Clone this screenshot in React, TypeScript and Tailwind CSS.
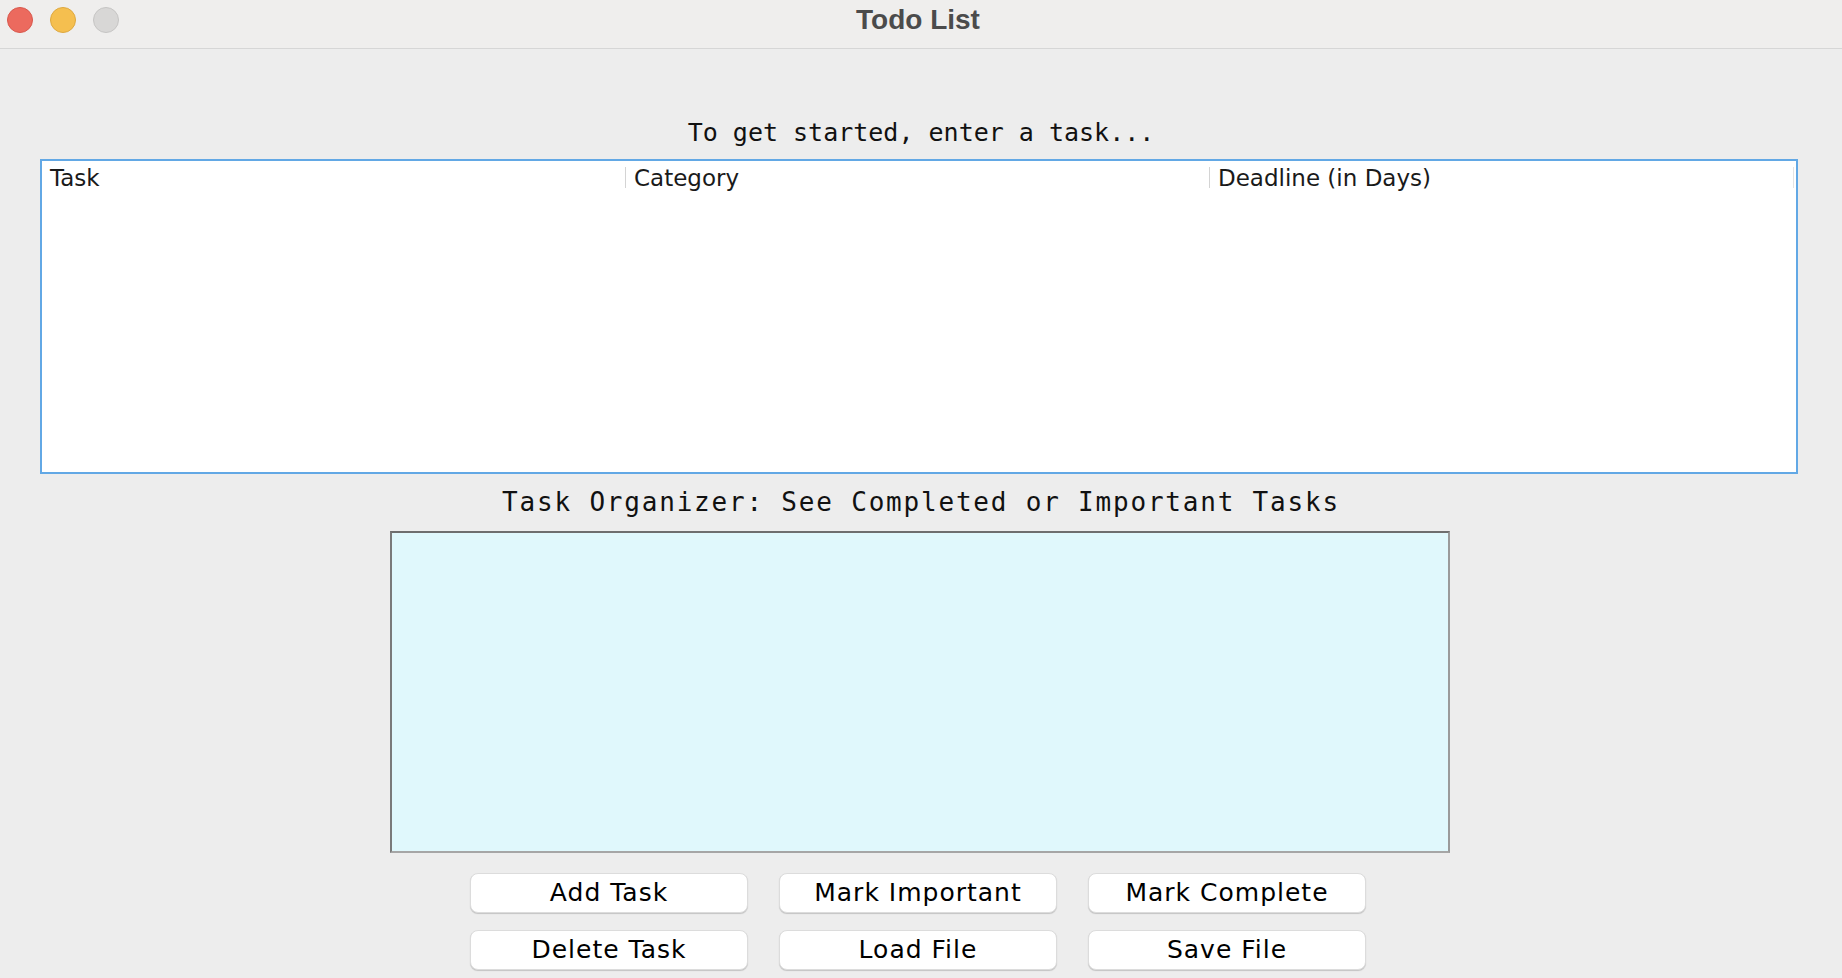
import React from 'react';

/**
 * Todo List window - a plain Swing-style task manager.
 */
const columns = ['Task', 'Category', 'Deadline (in Days)'];
const buttons = ['Add Task', 'Mark Important', 'Mark Complete', 'Delete Task', 'Load File', 'Save File'];

export default function App() {
    return (
        <div className="w-[1842px] h-[978px] bg-[#ededed] flex flex-col overflow-hidden">
            {/* Title bar */}
            <div className="relative h-[49px] shrink-0 bg-[#efeeed] border-b border-[#d6d6d6] flex items-center justify-center">
                <div className="absolute left-[7px] top-[7px] flex gap-[17px]">
                    <span className="w-[26px] h-[26px] rounded-full bg-[#ec6a5e] border border-[#d9574c]" />
                    <span className="w-[26px] h-[26px] rounded-full bg-[#f5bf4f] border border-[#dea83e]" />
                    <span className="w-[26px] h-[26px] rounded-full bg-[#d8d7d6] border border-[#c6c5c4]" />
                </div>
                <span className="-mt-[8px] -ml-[6px] text-[28px] font-bold text-[#4b4b4b] font-['Liberation_Sans',Arial,sans-serif]">
                    Todo List
                </span>
            </div>

            {/* Body */}
            <div className="flex flex-col items-center pt-[69px] px-[40px]">
                <p className="h-[30px] leading-[30px] text-[25px] text-[#111] font-['DejaVu_Sans_Mono',monospace]">
                    To get started, enter a task...
                </p>

                {/* Table */}
                <div className="mt-[11px] self-start w-[1758px] h-[315px] bg-white border-2 border-[#62a8e5]">
                    <div className="grid grid-cols-3 pr-[2px] h-[30px] font-['DejaVu_Sans',Verdana,sans-serif] text-[23px] text-[#1a1a1a]">
                        {columns.map((c, i) => (
                            <div key={c} className="relative flex items-center pl-[8px]">
                                {c}
                                <span className={`absolute right-0 top-[6px] h-[21px] w-px ${i === 2 ? 'bg-[#e4e4e4]' : 'bg-[#d4d4d4]'}`} />
                            </div>
                        ))}
                    </div>
                </div>

                <p className="mt-[13px] h-[30px] leading-[30px] text-[26px] tracking-[1.8px] text-[#111] font-['DejaVu_Sans_Mono',monospace]">
                    Task Organizer: See Completed or Important Tasks
                </p>

                {/* Organizer area */}
                <div className="mt-[14px] -ml-[2px] w-[1060px] h-[322px] bg-[#e0f8fc] border-2 border-t-[#6e6e6e] border-l-[#7a7a7a] border-r-[#9a9a9a] border-b-[#a6a6a6]" />

                {/* Buttons */}
                <div className="mt-[20px] -ml-[6px] grid grid-cols-3 gap-x-[31px] gap-y-[17px]">
                    {buttons.map((b) => (
                        <button
                            key={b}
                            className="w-[278px] h-[40px] bg-white rounded-[8px] border border-[#dcdcdc] shadow-[0_1px_1px_rgba(0,0,0,0.18)] text-[25px] tracking-[1px] text-black font-['DejaVu_Sans',Verdana,sans-serif] flex items-center justify-center"
                        >
                            {b}
                        </button>
                    ))}
                </div>
            </div>
        </div>
    );
}
